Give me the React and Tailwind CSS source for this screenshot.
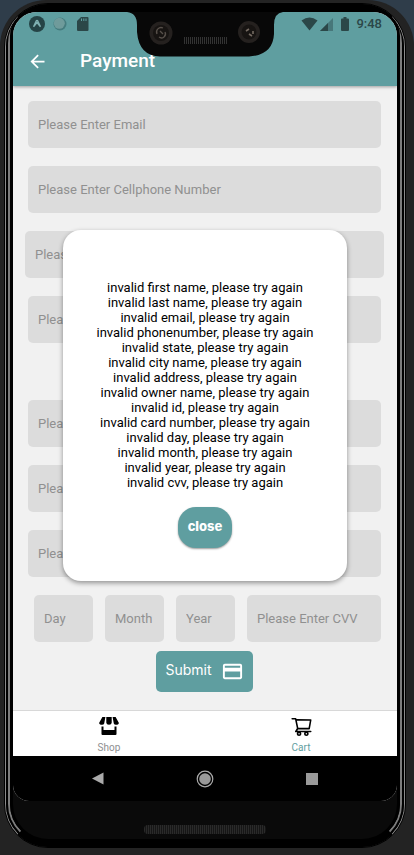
import React from "react";
import { MdArrowBack, MdPayment } from "react-icons/md";
import { AiOutlineShoppingCart } from "react-icons/ai";

const contactFields = ["Please Enter Email", "Please Enter Cellphone Number"];
const cardFields = ["Please Enter Owner Name", "Please Enter ID", "Please Enter Card Number"];

const errors = [
  "first name",
  "last name",
  "email",
  "phonenumber",
  "state",
  "city name",
  "address",
  "owner name",
  "id",
  "card number",
  "day",
  "month",
  "year",
  "cvv",
];

function Field({ label, className = "" }) {
  return (
    <input
      type="text"
      aria-label={label}
      placeholder={label}
      className={`block h-[47px] min-w-0 rounded-[5px] border-0 bg-[#dcdcdc] px-2.5 text-[13px] text-black outline-none placeholder:text-[#909090] ${className}`}
    />
  );
}

function StatusBar() {
  return (
    <div className="flex h-6 items-center justify-between pr-[15px] pl-4 text-[#2b4748]">
      <div className="flex items-center gap-2">
        <svg width="16" height="16" viewBox="0 0 16 16" aria-hidden="true">
          <circle cx="8" cy="8" r="8" fill="#254446" />
          <path d="M4.500 10.800 L7.200 5 Q8 3.800 8.800 5 L11.500 10.800 M4.500 10.800 L8 6.600 L11.500 10.800" fill="none" stroke="#7fb0b1" strokeWidth="1.400" />
        </svg>
        <svg width="14" height="14" viewBox="0 0 14 14" aria-hidden="true">
          <circle cx="7" cy="7" r="6.500" fill="#457c7e" />
          <circle cx="6.300" cy="6.300" r="5.500" fill="#6f9b9b" />
        </svg>
        <svg width="12" height="14" viewBox="0 0 12 14" className="ml-0.5" aria-hidden="true">
          <path d="M4 0h6.500q1 0 1 1v12q0 1-1 1h-9.500q-1 0-1-1V4z" fill="#2b4748" />
          <path d="M4.500 1.500v2.500M6.800 1.500v2.500M9 1.500v2.500" stroke="#5f9ea0" strokeWidth="1" />
        </svg>
      </div>
      <div className="flex items-center">
        <svg width="17" height="14" viewBox="0 0 17 14" aria-hidden="true">
          <path d="M8.500 13.500 L0.500 3.500 Q8.500 -2.500 16.500 3.500z" fill="#2b4748" />
        </svg>
        <svg width="13" height="13" viewBox="0 0 13 13" className="ml-0.5" aria-hidden="true">
          <path d="M0 13 L13 0 V13z" fill="#47777a" />
          <path d="M0 13 L8 5 V13z" fill="#2b4748" />
        </svg>
        <svg width="8" height="14" viewBox="0 0 8 14" className="ml-2" aria-hidden="true">
          <path d="M2.500 0h3v1.500H7q1 0 1 1V13q0 1-1 1H1q-1 0-1-1V2.500q0-1 1-1h1.500z" fill="#2b4748" />
        </svg>
        <span className="ml-[7px] text-[13px] leading-6 font-medium">9:48</span>
      </div>
    </div>
  );
}

function Notch() {
  return (
    <svg width="156" height="45" viewBox="0 0 156 45" className="absolute top-0 left-1/2 z-20 -translate-x-1/2" aria-hidden="true">
      <path d="M0 0 Q10 1 10 13 V20 Q12 44 33 44.500 H122 Q146 43 147 22 V13 Q147 1 156 0z" fill="#080808" />
      <circle cx="34" cy="21" r="11.500" fill="#25211f" />
      <circle cx="34" cy="21" r="8" fill="#171412" />
      <path d="M30 22a4.500 4.500 0 0 1 6-6M32 25a4 4 0 0 0 6-5M33 19l3 3" fill="none" stroke="#57504a" strokeWidth="1.300" />
      <circle cx="122" cy="20" r="11" fill="#25211f" />
      <circle cx="122" cy="20" r="7.500" fill="#171412" />
      <path d="M119 19l3-2M122 22l3 2M126 19v3" fill="none" stroke="#756b62" strokeWidth="1.600" />
      <path d="M57 28.500h44" stroke="#333" strokeWidth="7" strokeDasharray="1 1" />
    </svg>
  );
}

function ShopIcon() {
  return (
    <svg width="20" height="20" viewBox="0 0 20 20" aria-hidden="true">
      <path d="M3.400 1h3L5.200 7.500q-.4 1.300-2.100 1.300Q0 8.800.2 6.800zM7.300 1h5.400v5.700q-.1 2-2.700 2t-2.700-2zM13.600 1h3l3.200 5.800q.2 2-2.900 2-1.700 0-2.100-1.300z" fill="#000" />
      <path d="M2.500 10.500h2V14h11v-3.500h2V18q0 1-1 1h-13q-1 0-1-1z" fill="#000" />
    </svg>
  );
}

function ErrorDialog() {
  return (
    <div className="absolute inset-0 flex items-center justify-center pb-0.5">
      <div
        role="dialog"
        aria-label="Form errors"
        className="mx-[50px] flex min-w-0 flex-1 flex-col items-center rounded-[18px] bg-white pt-[50px] pb-[33px] shadow-[0_2px_5px_rgba(0,0,0,0.4)]"
      >
        <ul className="text-center text-[13px] leading-[15px] text-black">
          {errors.map((name) => (
            <li key={name}>invalid {name}, please try again</li>
          ))}
        </ul>
        <button
          type="button"
          className="mt-[17px] h-[41px] w-[54px] rounded-[18px] bg-[#5f9ea0] pb-0.5 font-['Inter',sans-serif] text-[13px] font-extrabold text-white shadow-[0_1px_2px_rgba(0,0,0,0.4)]"
        >
          close
        </button>
      </div>
    </div>
  );
}

function Screen() {
  return (
    <div className="relative flex flex-1 flex-col overflow-hidden rounded-t-[24px] rounded-b-[16px] bg-[#f1f1f1]">
      <header className="z-10 bg-[#5f9ea0] shadow-[0_1px_3px_rgba(0,0,0,0.35)]">
        <StatusBar />
        <div className="flex h-[50px] items-center gap-8 pl-[14px] text-white">
          <button type="button" aria-label="Back">
            <MdArrowBack size={21} />
          </button>
          <h1 className="text-[19px] font-medium">Payment</h1>
        </div>
      </header>

      <form className="flex flex-1 flex-col pt-[15px] pr-4 pb-[17px] pl-[15px]" onSubmit={(e) => e.preventDefault()}>
        <div className="flex flex-col gap-[18px]">
          {contactFields.map((label) => (
            <Field key={label} label={label} />
          ))}
          <Field label="Please Enter State" className="-mx-[3px]" />
          <Field label="Please Enter Address" />
        </div>
        <div className="mt-[57px] flex flex-col gap-[18px]">
          {cardFields.map((label) => (
            <Field key={label} label={label} />
          ))}
          <div className="flex gap-3 pl-1.5">
            <Field label="Day" className="w-[59px]" />
            <Field label="Month" className="w-[59px]" />
            <Field label="Year" className="w-[59px]" />
            <Field label="Please Enter CVV" className="flex-1" />
          </div>
        </div>
        <button
          type="submit"
          className="mt-[9px] flex h-[41px] items-center gap-[9px] self-center rounded-[5px] bg-[#5f9ea0] px-[9px] font-['Inter',sans-serif] text-[14px] text-white"
        >
          <span className="pb-1">Submit</span>
          <MdPayment size={23} />
        </button>
      </form>

      <nav className="grid grid-cols-2 border-t border-[#d8d8d8] bg-white text-[10px] leading-3">
        <a href="#shop" className="flex h-[45px] flex-col items-center gap-1.5 pt-[5px] text-[#8e8e8f]">
          <ShopIcon />
          Shop
        </a>
        <a href="#cart" className="flex h-[45px] flex-col items-center gap-1 pt-1 text-[#5f9ea0]">
          <AiOutlineShoppingCart size={23} className="text-black" />
          Cart
        </a>
      </nav>

      <div className="grid h-[45px] grid-cols-3 items-center justify-items-center bg-black px-8">
        <button type="button" aria-label="System back">
          <svg width="12" height="13" viewBox="0 0 12 13"><path d="M0 6.500 L11.500 0.500 V12.500z" fill="#aaa" /></svg>
        </button>
        <button type="button" aria-label="Home">
          <svg width="18" height="18" viewBox="0 0 18 18">
            <circle cx="9" cy="9" r="7.800" fill="none" stroke="#aaa" strokeWidth="1.200" />
            <circle cx="9" cy="9" r="5.800" fill="#999" />
          </svg>
        </button>
        <button type="button" aria-label="Recent apps" className="size-3 bg-[#9a9a9a]" />
      </div>

      <ErrorDialog />
      <Notch />
    </div>
  );
}

export default function App() {
  return (
    <div className="flex min-h-screen bg-[#2f3d4a] font-['Roboto',sans-serif]">
      <div className="flex min-w-0 flex-1 rounded-t-[46px] bg-[#232323] pt-[3px] pr-2 pb-[7px] pl-1">
        <div className="flex min-w-0 flex-1 rounded-[44px] border border-black">
          <div className="flex min-w-0 flex-1 rounded-[43px] border border-x-[#8a8a8a] border-y-black bg-black">
            <div className="flex min-w-0 flex-1 rounded-[42px] border-2 border-black bg-black">
              <div className="flex min-w-0 flex-1 rounded-t-[36px] rounded-b-[40px] border-2 border-x-[#7d7d7d] border-y-black bg-black">
                <div className="flex min-w-0 flex-1 flex-col rounded-t-[27px] rounded-b-[38px] border-3 border-black bg-[#0a0a0a]">
                  <Screen />
                  <div className="flex h-[38px] flex-col items-center pt-6">
                    <div className="h-[9px] w-[122px] rounded-sm bg-[repeating-linear-gradient(90deg,#2a2a2a_0px,#2a2a2a_1px,#161616_1px,#161616_2px)]" />
                  </div>
                </div>
              </div>
            </div>
          </div>
        </div>
      </div>
    </div>
  );
}
